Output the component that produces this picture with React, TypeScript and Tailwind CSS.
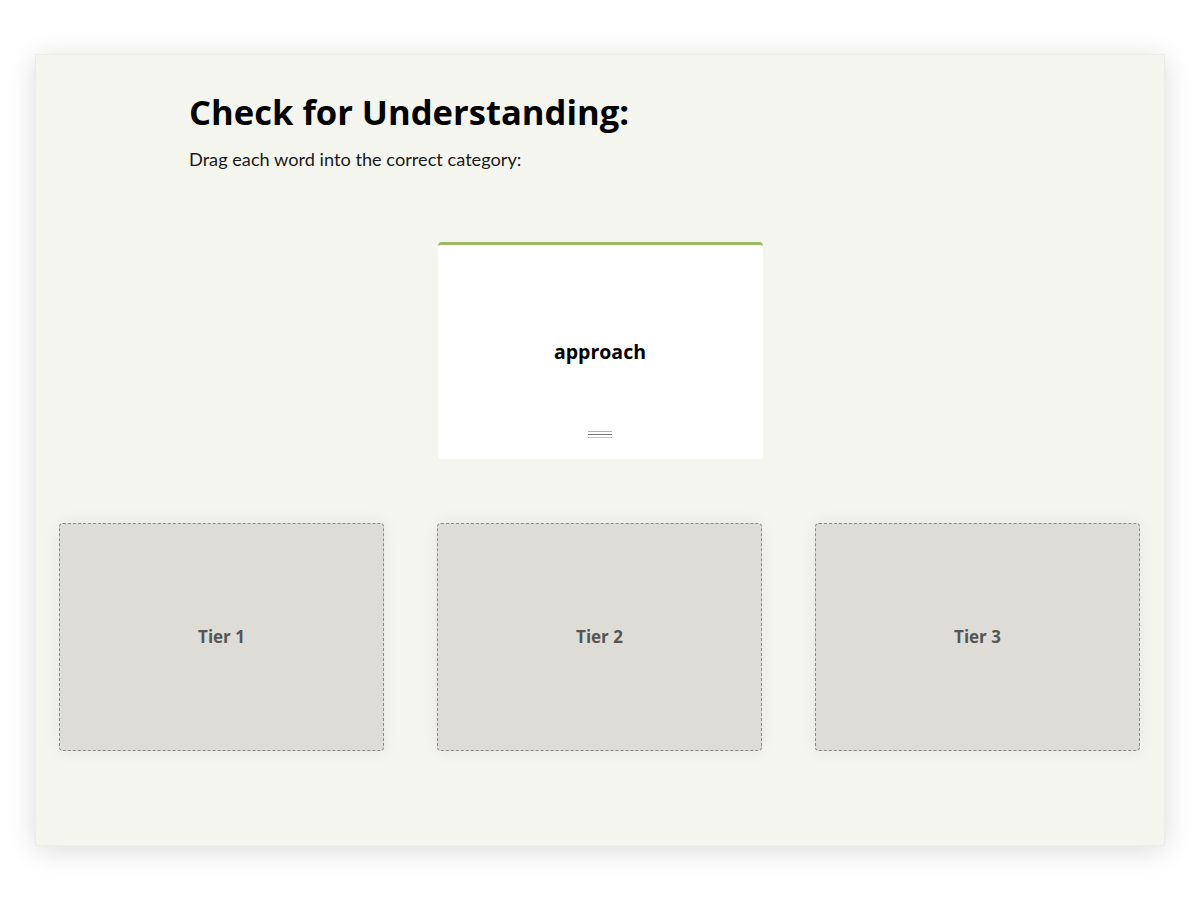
const tiers = ["Tier 1", "Tier 2", "Tier 3"];

export default function App() {
  return (
    <div className="min-h-screen bg-white pt-[55px] pl-[36px]">
      <div className="w-[1128px] h-[790px] bg-[#f4f5ef] shadow-[0_0_0_1px_#ecede6,0_4px_28px_rgba(0,0,0,0.16)] flex flex-col">
        {/* Header */}
        <div className="pl-[153px] pt-[33px]">
          <h1 className="font-['Open_Sans',sans-serif] font-bold text-[34.6px] leading-[48px] text-black">
            Check for Understanding:
          </h1>
          <p className="mt-[11px] font-['Lato',sans-serif] text-[18.2px] leading-[24px] text-[#1a1a1a]">
            Drag each word into the correct category:
          </p>
        </div>

        {/* Word card */}
        <div className="mt-[71px] flex justify-center">
          <div className="w-[325px] h-[217px] bg-white rounded-[4px] border-t-[3px] border-[#9ab866] flex flex-col items-center">
            <div className="flex-1 flex items-center justify-center pt-[28px]">
              <span className="font-['Open_Sans',sans-serif] font-bold text-[19.5px] text-black">
                approach
              </span>
            </div>
            <div className="mb-[21px] flex flex-col gap-[2px] w-[24px]">
              <div className="h-[1px] bg-[#b0b0b0]" />
              <div className="h-[1px] bg-[#777]" />
              <div className="h-[1px] bg-[#c4c4c4]" />
            </div>
          </div>
        </div>

        {/* Tier drop zones */}
        <div className="mt-[64px] flex gap-[53px] pl-[23px]">
          {tiers.map((t) => (
            <div
              key={t}
              className="w-[325px] h-[228px] bg-[#dddcd7] border border-dashed border-[#8a8a8a] rounded-[4px] shadow-[0_0_18px_rgba(0,0,0,0.06)] flex items-center justify-center"
            >
              <span className="font-['Open_Sans',sans-serif] font-bold text-[17px] text-[#555]">
                {t}
              </span>
            </div>
          ))}
        </div>
      </div>
    </div>
  );
}
